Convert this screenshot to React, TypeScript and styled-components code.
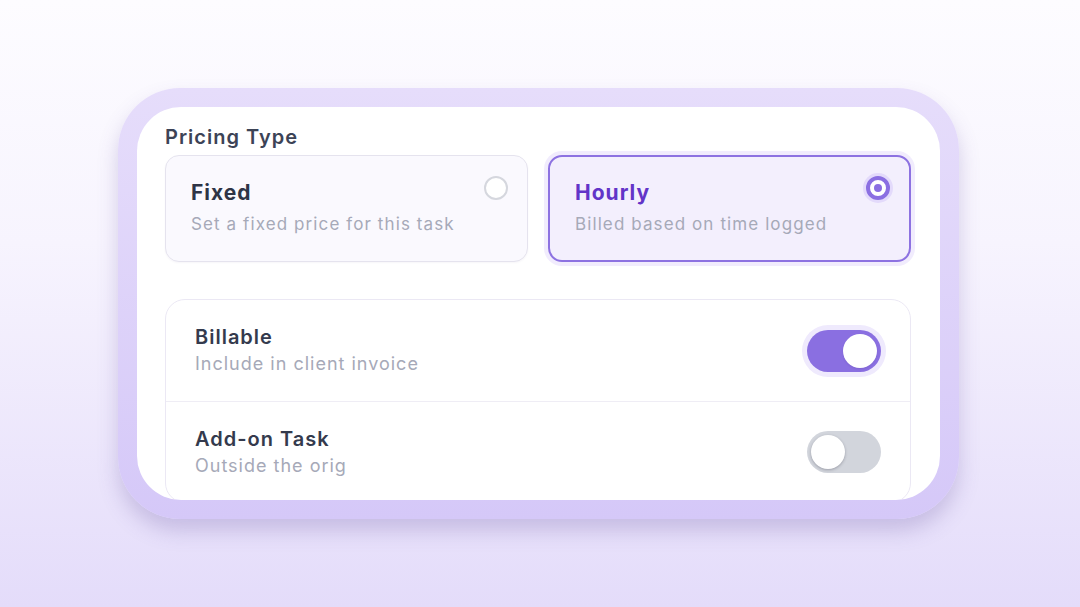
import styled, { createGlobalStyle } from "styled-components";
import { useState } from "react";

const GlobalStyle = createGlobalStyle`
  html, body {
    margin: 0;
    padding: 0;
  }
  body {
    font-family: Inter, "Noto Sans", "Liberation Sans", sans-serif;
    background: linear-gradient(180deg, #fdfcff 0%, #f7f4fe 40%, #e4dcfa 100%);
    min-height: 607px;
  }
`;

type PlanKey = "fixed" | "hourly";

const plans: { key: PlanKey; title: string; desc: string }[] = [
  { key: "fixed", title: "Fixed", desc: "Set a fixed price for this task" },
  { key: "hourly", title: "Hourly", desc: "Billed based on time logged" },
];

function App() {
  const [plan, setPlan] = useState<PlanKey>("hourly");
  const [billable, setBillable] = useState(true);
  const [addOn, setAddOn] = useState(false);

  const settings = [
    {
      title: "Billable",
      desc: "Include in client invoice",
      on: billable,
      toggle: () => setBillable(!billable),
    },
    {
      title: "Add-on Task",
      desc: "Outside the orig",
      on: addOn,
      toggle: () => setAddOn(!addOn),
    },
  ];

  return (
    <>
      <GlobalStyle />
      <Page>
        <Frame>
          <Panel>
            <SectionLabel>Pricing Type</SectionLabel>
            <PlanGrid>
              {plans.map((p) => (
                <PlanCard
                  key={p.key}
                  $active={plan === p.key}
                  onClick={() => setPlan(p.key)}
                >
                  <PlanText>
                    <PlanTitle $active={plan === p.key}>{p.title}</PlanTitle>
                    <PlanDesc>{p.desc}</PlanDesc>
                  </PlanText>
                  <Radio $active={plan === p.key} />
                </PlanCard>
              ))}
            </PlanGrid>

            <SettingsList>
              {settings.map((s) => (
                <SettingRow key={s.title}>
                  <SettingText>
                    <SettingTitle>{s.title}</SettingTitle>
                    <SettingDesc>{s.desc}</SettingDesc>
                  </SettingText>
                  <Switch $on={s.on} onClick={s.toggle}>
                    <Knob $on={s.on} />
                  </Switch>
                </SettingRow>
              ))}
            </SettingsList>
          </Panel>
        </Frame>
      </Page>
    </>
  );
}

export default App;

const Page = styled.div`
  display: flex;
  justify-content: center;
  padding: 88px 3px 0 0;
`;

const Frame = styled.div`
  width: 803px;
  padding: 19px;
  border-radius: 62px;
  background: linear-gradient(180deg, #e6ddfb 0%, #d5c8f8 100%);
  box-shadow: 0 12px 20px rgba(100, 80, 160, 0.25);
`;

const Panel = styled.div`
  height: 393px;
  box-sizing: border-box;
  padding: 18px 29px 0 28px;
  background: #ffffff;
  border-radius: 44px;
  overflow: hidden;
`;

const SectionLabel = styled.div`
  font-size: 20px;
  font-weight: 600;
  line-height: 24px;
  letter-spacing: 1px;
  color: #3c4356;
  margin-bottom: 6px;
`;

const PlanGrid = styled.div`
  display: grid;
  grid-template-columns: 1fr 1fr;
  gap: 20px;
`;

const PlanCard = styled.div<{ $active: boolean }>`
  height: 107px;
  box-sizing: border-box;
  display: flex;
  justify-content: space-between;
  align-items: flex-start;
  padding: ${(p) => (p.$active ? "23px 19px 0 25px" : "24px 19px 0 25px")};
  border-radius: 14px;
  cursor: pointer;
  border: ${(p) => (p.$active ? "2px solid #8d72e1" : "1px solid #e5e3ee")};
  background: ${(p) => (p.$active ? "#f3effd" : "#faf9fe")};
  box-shadow: ${(p) =>
    p.$active ? "0 0 0 4px #f1ecfd" : "0 1px 2px rgba(40, 30, 90, 0.04)"};
`;

const PlanText = styled.div`
  display: flex;
  flex-direction: column;
  gap: 6px;
`;

const PlanTitle = styled.div<{ $active: boolean }>`
  font-size: 21px;
  font-weight: 700;
  line-height: 26px;
  letter-spacing: 1px;
  color: ${(p) => (p.$active ? "#6234c8" : "#2e3446")};
`;

const PlanDesc = styled.div`
  font-size: 17px;
  line-height: 24px;
  letter-spacing: 1.1px;
  color: #a6a9b8;
`;

const Radio = styled.span<{ $active: boolean }>`
  width: 24px;
  height: 24px;
  box-sizing: border-box;
  border-radius: 50%;
  margin-top: -4px;
  background: #ffffff;
  border: ${(p) => (p.$active ? "4px solid #8b6fe2" : "2px solid #d5d7de")};
  box-shadow: ${(p) => (p.$active ? "0 0 0 3px #e3dafb" : "none")};
  display: flex;
  align-items: center;
  justify-content: center;

  &::after {
    content: "";
    display: ${(p) => (p.$active ? "block" : "none")};
    width: 8px;
    height: 8px;
    border-radius: 50%;
    background: #8b6fe2;
  }
`;

const SettingsList = styled.div`
  margin-top: 37px;
  border: 1px solid #ebe8f4;
  border-radius: 20px;
`;

const SettingRow = styled.div`
  height: 101px;
  box-sizing: border-box;
  display: flex;
  align-items: center;
  justify-content: space-between;
  padding: 0 29px 0 29px;

  & + & {
    border-top: 1px solid #efedf5;
  }
`;

const SettingText = styled.div`
  display: flex;
  flex-direction: column;
  gap: 3px;
`;

const SettingTitle = styled.div`
  font-size: 20px;
  font-weight: 600;
  line-height: 24px;
  letter-spacing: 1px;
  color: #343a4d;
`;

const SettingDesc = styled.div`
  font-size: 18px;
  line-height: 24px;
  letter-spacing: 1px;
  color: #a6a9b8;
`;

const Switch = styled.button<{ $on: boolean }>`
  width: 74px;
  height: 42px;
  padding: 4px;
  border: none;
  border-radius: 21px;
  display: flex;
  justify-content: ${(p) => (p.$on ? "flex-end" : "flex-start")};
  align-items: center;
  cursor: pointer;
  background: ${(p) => (p.$on ? "#8a6fe1" : "#d2d5dc")};
  box-shadow: ${(p) => (p.$on ? "0 0 0 5px #efeafd" : "none")};
`;

const Knob = styled.span<{ $on: boolean }>`
  width: 34px;
  height: 34px;
  border-radius: 50%;
  background: #ffffff;
  box-shadow: ${(p) =>
    p.$on ? "0 1px 2px rgba(60, 40, 120, 0.15)" : "0 1px 3px rgba(30, 30, 50, 0.3)"};
`;
